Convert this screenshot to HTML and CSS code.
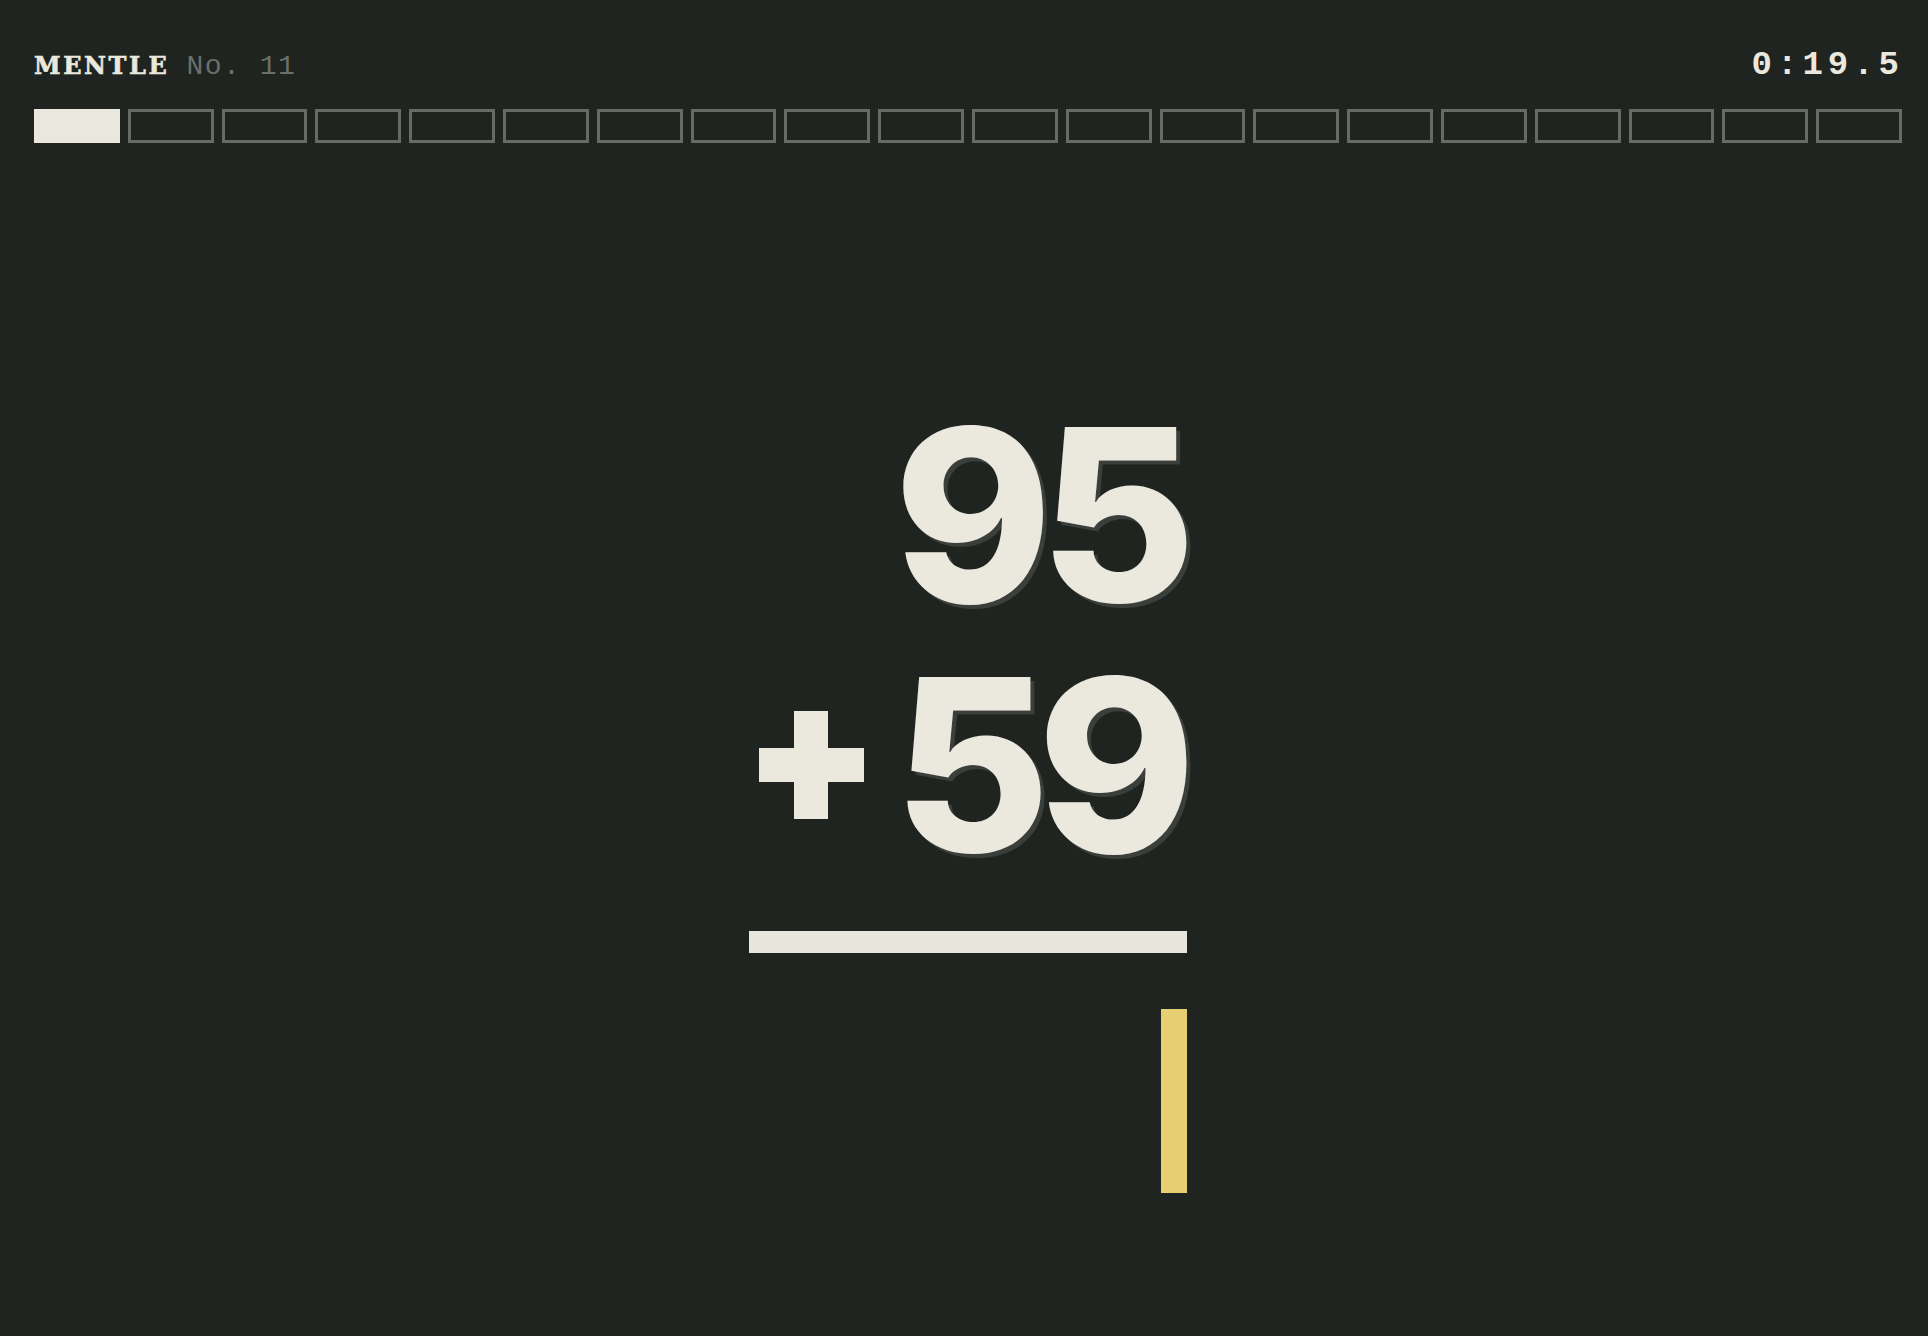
FILE: index.html
```html
<!DOCTYPE html>
<html lang="en">
<head>
<meta charset="utf-8">
<title>Mentle No. 11</title>
<link rel="stylesheet" href="styles.css">
</head>
<body>
<div class="app">
  <header class="topbar">
    <div class="brand"><span class="brand-name">MENTLE</span><span class="brand-no">No. 11</span></div>
    <div class="timer">0:19.5</div>
  </header>
  <div class="progress">
    <div class="step done"></div>
    <div class="step"></div><div class="step"></div><div class="step"></div><div class="step"></div>
    <div class="step"></div><div class="step"></div><div class="step"></div><div class="step"></div>
    <div class="step"></div><div class="step"></div><div class="step"></div><div class="step"></div>
    <div class="step"></div><div class="step"></div><div class="step"></div><div class="step"></div>
    <div class="step"></div><div class="step"></div><div class="step"></div>
  </div>
  <main class="stage">
    <div class="problem">
      <div class="row"><span class="num">95</span></div>
      <div class="row">
        <svg class="plus" width="105" height="108" viewBox="0 0 105 108" aria-label="plus"><rect x="0" y="37" width="105" height="34"/><rect x="35" y="0" width="34" height="108"/></svg>
        <span class="num">59</span>
      </div>
      <div class="rule"></div>
      <div class="answer"><div class="cursor"></div></div>
    </div>
  </main>
</div>
</body>
</html>
```
FILE: styles.css
```css
html, body {
  margin: 0;
  padding: 0;
  background: #1f2421;
  height: 100%;
}
body {
  color: #ebe8de;
  font-family: "Liberation Mono", "DejaVu Sans Mono", monospace;
}
.app {
  padding: 0 26px 0 34px;
}
.topbar {
  display: flex;
  justify-content: space-between;
  align-items: baseline;
  padding-top: 48px;
  height: 40px;
  line-height: 1;
}
.brand {
  display: flex;
  align-items: baseline;
  gap: 17px;
}
.brand-name {
  font-family: "DejaVu Serif", "Liberation Serif", serif;
  font-size: 24px;
  font-weight: 700;
  letter-spacing: 2.6px;
  -webkit-text-stroke: 0.6px #ebe8de;
  color: #ebe8de;
}
.brand-no {
  font-size: 28px;
  font-weight: 400;
  letter-spacing: 1.5px;
  color: #6b6f6a;
}
.timer {
  font-size: 34px;
  font-weight: 700;
  letter-spacing: 5px;
  margin-right: -2px;
  color: #ebe8de;
}
.progress {
  display: flex;
  gap: 8px;
  margin-top: 21px;
}
.step {
  flex: 1;
  height: 34px;
  box-sizing: border-box;
  border: 3px solid #676b66;
}
.step.done {
  background: #eae7de;
  border-color: #eae7de;
}
.stage {
  display: flex;
  justify-content: center;
  padding-top: 247px;
}
.problem {
  width: 438px;
  display: flex;
  flex-direction: column;
  align-items: flex-end;
}
.row {
  display: flex;
  align-items: center;
  height: 250px;
  width: 100%;
  justify-content: flex-end;
}
.num {
  font-family: Inter, "Liberation Sans", sans-serif;
  font-weight: 800;
  font-size: 240px;
  line-height: 250px;
  letter-spacing: -13px;
  margin-right: 4px;
  color: #ebe8de;
  text-shadow: 4px 4px 0 #3b3f3b;
}
.plus {
  fill: #ebe8de;
  margin-right: auto;
  margin-left: 10px;
}
.rule {
  width: 100%;
  height: 22px;
  background: #e8e6dc;
  margin-top: 41px;
}
.answer {
  display: flex;
  justify-content: flex-end;
  margin-top: 56px;
  width: 100%;
}
.cursor {
  width: 26px;
  height: 184px;
  background: #e5cf72;
}
```
